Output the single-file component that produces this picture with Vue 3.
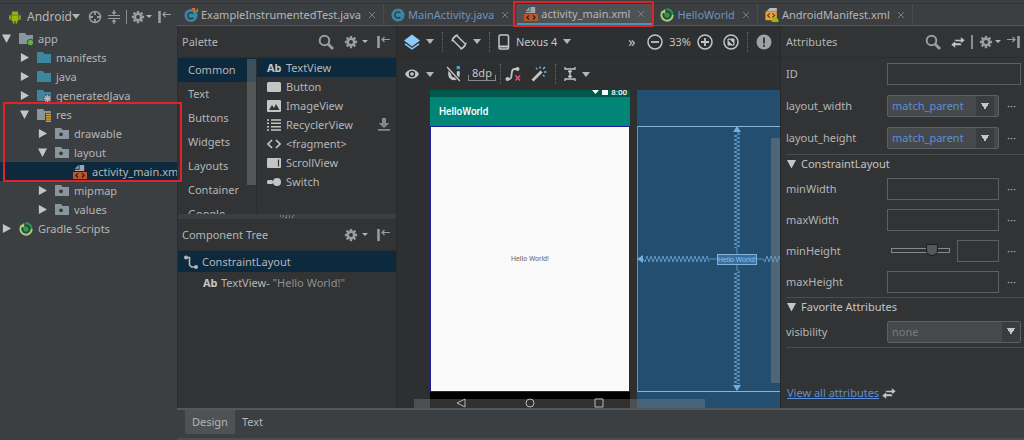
<script setup>
import { ref, computed } from 'vue'

const tree = [
	{ name: 'app', level: 0, icon: 'folder-app', open: true },
	{ name: 'manifests', level: 1, icon: 'folder-blue', open: false },
	{ name: 'java', level: 1, icon: 'folder-blue', open: false },
	{ name: 'generatedJava', level: 1, icon: 'folder-gen', open: false }
]
const resTree = [
	{ name: 'res', level: 1, icon: 'folder-res', open: true },
	{ name: 'drawable', level: 2, icon: 'folder-pkg', open: false },
	{ name: 'layout', level: 2, icon: 'folder-pkg', open: true },
	{ name: 'activity_main.xml', level: 3, icon: 'xml', selected: true }
]
const restTree = [
	{ name: 'mipmap', level: 2, icon: 'folder-pkg', open: false },
	{ name: 'values', level: 2, icon: 'folder-pkg', open: false },
	{ name: 'Gradle Scripts', level: 0, icon: 'gradle', open: false }
]
const treeGroups = [
	{ rows: tree },
	{ rows: resTree, marked: true },
	{ rows: restTree }
]

const tabs = [
	{ name: 'ExampleInstrumentedTest.java', icon: 'class-test' },
	{ name: 'MainActivity.java', icon: 'class', changed: true },
	{ name: 'activity_main.xml', icon: 'xml', active: true },
	{ name: 'HelloWorld', icon: 'gradle', changed: true },
	{ name: 'AndroidManifest.xml', icon: 'manifest' }
]

const categories = ['Common', 'Text', 'Buttons', 'Widgets', 'Layouts', 'Containers', 'Google']
const currentCategory = ref(0)

const widgets = [
	{ name: 'TextView', icon: 'ab' },
	{ name: 'Button', icon: 'button' },
	{ name: 'ImageView', icon: 'image' },
	{ name: 'RecyclerView', icon: 'list', download: true },
	{ name: '<fragment>', icon: 'code' },
	{ name: 'ScrollView', icon: 'scroll' },
	{ name: 'Switch', icon: 'switch' }
]
const currentWidget = ref(0)

const layoutWidth = ref('match_parent')
const layoutHeight = ref('match_parent')
const minHeight = ref(76)
const mode = ref('Design')

// spring line of a constraint, drawn from one end to the other
const spring = (from, to, center, vertical) => {
	let d = vertical ? `M${center} ${from}` : `M${from} ${center}`
	let side = 1
	for (let i = from + 2; i <= to; i += 2) {
		const off = center + side * 3
		d += vertical ? `L${off} ${i}` : `L${i} ${off}`
		side = -side
	}
	return d
}
const springs = computed(() => [
	spring(42, 158, 100, true),
	spring(180, 294, 100, true),
	spring(6, 72, 169, false),
	spring(126, 192, 169, false)
])
</script>

<template>
	<svg class="sprite" aria-hidden="true">
		<symbol id="gear" viewBox="0 0 16 16">
			<circle cx="8" cy="8" r="3.7" fill="none" stroke="currentColor" stroke-width="3" />
			<path d="M8 1v3M8 12v3M1 8h3M12 8h3M3 3l2 2M11 11l2 2M13 3l-2 2M5 11l-2 2" stroke="currentColor" stroke-width="2.6" />
		</symbol>
		<symbol id="dock" viewBox="0 0 14 14">
			<path d="M2.5 1v12" stroke="currentColor" stroke-width="2.6" />
			<path d="M6 4.500h8M8.500 2L6 4.500l2.500 2.500" fill="none" stroke="currentColor" stroke-width="1.200" />
		</symbol>
		<symbol id="search" viewBox="0 0 16 16">
			<circle cx="6.500" cy="6.500" r="4.800" fill="none" stroke="currentColor" stroke-width="2" />
			<path d="M10 10l5 5" stroke="currentColor" stroke-width="2.800" />
		</symbol>
		<symbol id="swap" viewBox="0 0 16 14">
			<path d="M4 4h7V1l5 4-5 4V6.500H4zM12 8H5V5.500L0 10l5 4v-3h7z" fill="currentColor" stroke="#313335" stroke-width=".6" />
		</symbol>
		<symbol id="android" viewBox="0 0 14 16">
			<path d="M3 6h8v6.500H3zM3 5.300a4 3.700 0 0 1 8 0zM.5 6h1.700v5H.5zM11.800 6h1.700v5h-1.700zM4.500 12h1.800v3.500H4.500zM7.700 12h1.800v3.500H7.700z" fill="#97b80f" />
			<path d="M4 .8l1.300 2M10 .8l-1.300 2" stroke="#97b80f" stroke-width=".8" />
		</symbol>
		<symbol id="target" viewBox="0 0 14 14">
			<circle cx="7" cy="7" r="5.500" fill="none" stroke="currentColor" stroke-width="1.500" />
			<path d="M7 1v4M7 9v4M1 7h4M9 7h4" stroke="currentColor" stroke-width="1.800" />
		</symbol>
		<symbol id="collapse" viewBox="0 0 14 14">
			<path d="M1 5.500h12M1 8.500h12" stroke="currentColor" stroke-width="1.200" />
			<path d="M7 0v3M7 14v-3" stroke="currentColor" stroke-width="1.400" />
			<path d="M4.500 2L7 5l2.500-3zM4.500 12L7 9l2.500 3z" fill="currentColor" />
		</symbol>
		<symbol id="folder-blue" viewBox="0 0 14 14">
			<path d="M0 1h6l1.500 2H14v9H0z" fill="#3e86a0" />
		</symbol>
		<symbol id="folder-app" viewBox="0 0 14 14">
			<path d="M0 1h6l1.500 2H14v9H0z" fill="#8a969e" />
			<circle cx="11.500" cy="10.500" r="3.200" fill="#62b543" stroke="#3c3f41" stroke-width="1" />
		</symbol>
		<symbol id="folder-gen" viewBox="0 0 14 14">
			<path d="M0 1h6l1.500 2H14v9H0z" fill="#3e86a0" />
			<circle cx="10.500" cy="9.500" r="4.300" fill="#3c3f41" />
			<path d="M10.500 5.500v8M6.500 9.500h8M7.700 6.700l5.600 5.600M13.300 6.700l-5.600 5.600" stroke="#b4bcc0" stroke-width="1.400" />
		</symbol>
		<symbol id="folder-res" viewBox="0 0 14 14">
			<path d="M0 1h6l1.500 2H14v9H0z" fill="#8a969e" />
			<path d="M8 5h6v9H8z" fill="#3c3f41" />
			<path d="M9 6.500h5M9 8.800h5M9 11h5M9 13.200h5" stroke="#d9a343" stroke-width="1.400" />
		</symbol>
		<symbol id="folder-pkg" viewBox="0 0 14 14">
			<path d="M0 1h6l1.500 2H14v9H0z" fill="#8a969e" />
			<circle cx="6" cy="7.300" r="1.900" fill="#34393c" />
		</symbol>
		<symbol id="xml" viewBox="0 0 15 15">
			<path d="M7 0h5v6.500H2V5h5zM6 0v4H2z" fill="#9aa7b0" />
			<path d="M0 7.500h15V15H0z" fill="#b9572b" />
			<path d="M5.500 9L3 11.200l2.500 2.200M9.500 9l2.500 2.200-2.500 2.200" fill="none" stroke="#2b2220" stroke-width="1.300" />
		</symbol>
		<symbol id="gradle" viewBox="0 0 16 16">
			<path d="M8 14.500A6.500 6.500 0 0 1 3 4" fill="none" stroke="#a5cf7b" stroke-width="2.200" />
			<path d="M8 14.500A6.500 6.500 0 0 0 14.500 8" fill="none" stroke="#a5cf7b" stroke-width="2.200" />
			<path d="M7.500 1.500A6.500 6.500 0 0 1 14.500 8" fill="none" stroke="#1ba24b" stroke-width="2.200" />
			<path d="M1 4.500L6 1v5.500z" fill="#a5cf7b" />
			<circle cx="8" cy="8" r="3" fill="#1ba24b" />
		</symbol>
		<symbol id="class" viewBox="0 0 15 15">
			<circle cx="7.500" cy="7.500" r="7" fill="#3e86a0" />
			<path d="M10 5.300a3.300 3.300 0 1 0 0 4.400" fill="none" stroke="#253c47" stroke-width="1.500" />
		</symbol>
		<symbol id="class-test" viewBox="0 0 15 15">
			<circle cx="7.500" cy="8" r="7" fill="#3e86a0" />
			<path d="M9.800 6a3.300 3.300 0 1 0 0 4.400" fill="none" stroke="#253c47" stroke-width="1.500" />
			<path d="M8 0h4v5z" fill="#f26522" />
			<path d="M15 0v4h-3z" fill="#62b543" />
		</symbol>
		<symbol id="manifest" viewBox="0 0 15 16">
			<path d="M5 0h8v4H1z" fill="#b4bcc0" />
			<path d="M0 4h13v10H0z" fill="#e9a13b" />
			<path d="M5 6L2.500 8.500 5 11M8 6l2.500 2.500L8 11" fill="none" stroke="#4a3213" stroke-width="1.200" />
			<path d="M7 15a4 4 0 0 1 8 0v1H7z" fill="#97b80f" />
		</symbol>
		<symbol id="button" viewBox="0 0 14 14">
			<rect y="2" width="14" height="10" rx="1.500" fill="currentColor" />
		</symbol>
		<symbol id="image" viewBox="0 0 14 14">
			<rect y="1" width="14" height="12" rx="1" fill="currentColor" />
			<path d="M2 11l3-5 2 3 2-4 3.500 6z" fill="#313335" />
		</symbol>
		<symbol id="list" viewBox="0 0 14 14">
			<path d="M0 2h2M0 5.300h2M0 8.700h2M0 12h2M4 2h10M4 5.300h10M4 8.700h10M4 12h10" stroke="currentColor" stroke-width="1.500" />
		</symbol>
		<symbol id="code" viewBox="0 0 14 14">
			<path d="M5 3L1 7l4 4M9 3l4 4-4 4" fill="none" stroke="currentColor" stroke-width="1.600" />
		</symbol>
		<symbol id="scroll" viewBox="0 0 14 14">
			<rect y="2" width="14" height="10" rx="1" fill="currentColor" />
			<path d="M11.500 3.500v7" stroke="#313335" stroke-width="1.200" />
		</symbol>
		<symbol id="switch" viewBox="0 0 14 14">
			<rect y="5" width="6" height="4" rx="1.500" fill="currentColor" />
			<circle cx="10" cy="7" r="4" fill="currentColor" />
		</symbol>
		<symbol id="download" viewBox="0 0 12 13">
			<path d="M4 0h4v5h3.500L6 10 .5 5H4zM0 11h12v1.800H0z" fill="#85898b" />
		</symbol>
		<symbol id="constraint" viewBox="0 0 14 14">
			<path d="M2 2.500h3.500v7.500l2 2H12" fill="none" stroke="currentColor" stroke-width="1.600" />
			<circle cx="2" cy="2.500" r="2" fill="currentColor" />
			<circle cx="12" cy="12" r="2" fill="currentColor" />
		</symbol>
		<symbol id="layers" viewBox="0 0 16 16">
			<path d="M8 .5l8 6-8 6-8-6z" fill="#8fcbfa" />
			<path d="M1 9.800l7 5 7-5" fill="none" stroke="#8fcbfa" stroke-width="1.600" />
		</symbol>
		<symbol id="rotate" viewBox="0 0 16 16">
			<rect x="5" y="1.500" width="6" height="13" rx="1" fill="none" stroke="currentColor" stroke-width="1.500" transform="rotate(-45 8 8)" />
			<path d="M1 7.500a7 7 0 0 1 6-6.700M15 8.500a7 7 0 0 1-6 6.700" fill="none" stroke="currentColor" stroke-width="1.300" />
		</symbol>
		<symbol id="phone" viewBox="0 0 12 16">
			<rect x="1" y="1" width="9.500" height="14" rx="1.200" fill="none" stroke="currentColor" stroke-width="1.500" />
			<path d="M1 12.500h9.500" stroke="currentColor" stroke-width="2" />
		</symbol>
		<symbol id="minus" viewBox="0 0 16 16">
			<circle cx="8" cy="8" r="7" fill="none" stroke="currentColor" stroke-width="1.500" />
			<path d="M4 8h8" stroke="currentColor" stroke-width="1.800" />
		</symbol>
		<symbol id="plus" viewBox="0 0 16 16">
			<circle cx="8" cy="8" r="7" fill="none" stroke="currentColor" stroke-width="1.500" />
			<path d="M4 8h8M8 4v8" stroke="currentColor" stroke-width="1.800" />
		</symbol>
		<symbol id="fit" viewBox="0 0 16 16">
			<circle cx="8" cy="8" r="7" fill="none" stroke="currentColor" stroke-width="1.500" />
			<rect x="4.500" y="4.500" width="7" height="7" rx="1" fill="currentColor" />
			<path d="M6 6l4 4" stroke="#2d2f31" stroke-width="2" />
		</symbol>
		<symbol id="alert" viewBox="0 0 16 16">
			<circle cx="8" cy="8" r="7.500" fill="currentColor" />
			<path d="M8 3.500v6M8 10.800v2" stroke="#2d2f31" stroke-width="1.800" />
		</symbol>
		<symbol id="eye" viewBox="0 0 16 12">
			<path d="M1 6c3-6 11-6 14 0-3 6-11 6-14 0z" fill="currentColor" />
			<circle cx="8" cy="6" r="3.200" fill="#2d2f31" />
			<circle cx="8" cy="6" r="1.800" fill="currentColor" />
		</symbol>
		<symbol id="magnet" viewBox="0 0 15 15">
			<path d="M3.500 3v5a4 4 0 0 0 8 0V5" fill="none" stroke="currentColor" stroke-width="2.800" />
			<path d="M1 1l12 13" stroke="#2d2f31" stroke-width="3" />
			<path d="M1 1l12 13" stroke="currentColor" stroke-width="1.300" />
			<path d="M10 0h3v3h-3z" fill="#4fa3d8" />
		</symbol>
		<symbol id="clear" viewBox="0 0 16 16">
			<path d="M1 13h3.500c4 0 0-10 5-10H13" fill="none" stroke="currentColor" stroke-width="1.800" />
			<circle cx="2.500" cy="13" r="2" fill="currentColor" />
			<circle cx="12.500" cy="3" r="2" fill="currentColor" />
			<path d="M10.500 9.500l4.500 5M15 9.500l-4.500 5" stroke="#e0546e" stroke-width="1.700" />
		</symbol>
		<symbol id="wand" viewBox="0 0 16 16">
			<path d="M1.500 14.500l9-9" stroke="currentColor" stroke-width="2.800" />
			<path d="M9 .5v2M5 2l1.300 1.300M14 1l-2 2M13 6h2.500M12 9l1.500 1.500" stroke="#69b4e8" stroke-width="1.500" />
		</symbol>
		<symbol id="align" viewBox="0 0 12 16">
			<path d="M1 1v2h10V1M1 15v-2h10v2" fill="none" stroke="currentColor" stroke-width="1.300" />
			<path d="M6 4v8M4 5.500h4M4 10.500h4" stroke="currentColor" stroke-width="1.500" />
		</symbol>
	</svg>

	<div class="studio">
		<aside class="project">
			<header class="project-bar">
				<svg class="icon"><use href="#android" /></svg>
				<span class="project-name">Android</span>
				<i class="caret"></i>
				<svg class="icon first"><use href="#target" /></svg>
				<svg class="icon"><use href="#collapse" /></svg>
				<i class="bar"></i>
				<svg class="icon"><use href="#gear" /></svg>
				<i class="caret small"></i>
				<svg class="icon dock"><use href="#dock" /></svg>
			</header>
			<ul v-for="(group, index) in treeGroups" :key="index" :class="{ marked: group.marked }">
				<li
					v-for="row in group.rows"
					:key="row.name"
					:class="['tree-row', 'level-' + row.level, { selected: row.selected }]">
					<i :class="['arrow', row.open ? 'down' : 'right', { none: row.selected }]"></i>
					<svg class="icon"><use :href="'#' + row.icon" /></svg>
					<span>{{ row.name }}</span>
				</li>
			</ul>
		</aside>

		<main class="editor">
			<nav class="tabs">
				<button
					v-for="tab in tabs"
					:key="tab.name"
					:class="['tab', { active: tab.active, changed: tab.changed }]">
					<svg class="icon"><use :href="'#' + tab.icon" /></svg>
					<span>{{ tab.name }}</span>
					<svg class="close" viewBox="0 0 8 8"><path d="M1 1l6 6M7 1L1 7" stroke="currentColor" /></svg>
				</button>
			</nav>

			<div class="workspace">
				<section class="side">
					<header class="panel-bar">
						<h2>Palette</h2>
						<svg class="icon big"><use href="#search" /></svg>
						<svg class="icon"><use href="#gear" /></svg>
						<i class="caret small"></i>
						<svg class="icon dock"><use href="#dock" /></svg>
					</header>
					<div class="palette">
						<ul class="categories">
							<li
								v-for="(category, index) in categories"
								:key="category"
								:class="{ selected: currentCategory == index }"
								@click="currentCategory = index">
								<span>{{ category }}</span>
							</li>
						</ul>
						<ul class="widgets">
							<li
								v-for="(widget, index) in widgets"
								:key="widget.name"
								:class="{ selected: currentWidget == index }"
								@click="currentWidget = index">
								<b v-if="widget.icon == 'ab'" class="ab">Ab</b>
								<svg v-else class="icon"><use :href="'#' + widget.icon" /></svg>
								<span>{{ widget.name }}</span>
								<svg v-if="widget.download" class="icon download"><use href="#download" /></svg>
							</li>
						</ul>
					</div>
					<div class="splitter"><i></i></div>
					<header class="panel-bar">
						<h2>Component Tree</h2>
						<svg class="icon"><use href="#gear" /></svg>
						<i class="caret small"></i>
						<svg class="icon dock"><use href="#dock" /></svg>
					</header>
					<ul class="components">
						<li class="selected">
							<svg class="icon"><use href="#constraint" /></svg>
							<span>ConstraintLayout</span>
						</li>
						<li class="child">
							<b class="ab">Ab</b>
							<span>TextView- <em>"Hello World!"</em></span>
						</li>
					</ul>
				</section>

				<section class="design">
					<div class="toolbar">
						<svg class="icon big"><use href="#layers" /></svg>
						<i class="caret"></i>
						<i class="dots"></i>
						<svg class="icon big"><use href="#rotate" /></svg>
						<i class="caret"></i>
						<i class="dots"></i>
						<svg class="icon big narrow"><use href="#phone" /></svg>
						<span>Nexus 4</span>
						<i class="caret"></i>
						<span class="more">»</span>
						<svg class="icon big"><use href="#minus" /></svg>
						<span>33%</span>
						<svg class="icon big"><use href="#plus" /></svg>
						<svg class="icon big fit"><use href="#fit" /></svg>
						<i class="dots"></i>
						<svg class="icon big alert"><use href="#alert" /></svg>
					</div>
					<div class="toolbar second">
						<svg class="icon big"><use href="#eye" /></svg>
						<i class="caret"></i>
						<svg class="icon big magnet"><use href="#magnet" /></svg>
						<span class="margin">8dp</span>
						<i class="dots tight"></i>
						<svg class="icon big"><use href="#clear" /></svg>
						<svg class="icon big wand"><use href="#wand" /></svg>
						<i class="dots"></i>
						<svg class="icon big narrow"><use href="#align" /></svg>
						<i class="caret"></i>
					</div>
					<div class="canvas">
						<div class="device">
							<div class="status">
								<svg class="signal" viewBox="0 0 16 7"><path d="M0 0h7L3.500 4zM10 0h6v5h-6z" fill="#fff" /></svg>
								<span>8:00</span>
							</div>
							<div class="app-bar">HelloWorld</div>
							<div class="screen">Hello World!</div>
							<div class="nav-bar">
								<svg viewBox="0 0 10 10"><path d="M9 1v8L1 5z" /></svg>
								<svg viewBox="0 0 10 10"><circle cx="5" cy="5" r="4" /></svg>
								<svg viewBox="0 0 10 10"><path d="M1 1h8v8H1z" /></svg>
							</div>
						</div>
						<div class="blueprint">
							<svg class="wires" width="200" height="318" fill="none">
								<path d="M0 36.500h200M0 301.500h200" stroke="#86b6d4" />
								<path d="M.5 36v266" stroke="#6f93aa" />
								<g stroke="#6ba6d8" stroke-width=".8">
									<path v-for="(d, index) in springs" :key="index" :d="d" />
									<path d="M100 158v6M100 174v6M72 169h8M120 169h6" />
								</g>
								<path d="M100 36l-4 6h8zM100 301l-4-6h8zM0 169l6-4v8z" fill="#6fb0e6" />
								<rect x="80.500" y="164.500" width="39" height="10" fill="#3a6f9c" stroke="#7fb4dd" />
								<text x="81" y="172">Hello World!</text>
							</svg>
						</div>
						<i class="scroll-y"></i>
						<i class="scroll-x"></i>
					</div>
				</section>

				<section class="attributes">
					<header class="panel-bar">
						<h2>Attributes</h2>
						<svg class="icon big"><use href="#search" /></svg>
						<svg class="icon swap"><use href="#swap" /></svg>
						<i class="bar"></i>
						<svg class="icon"><use href="#gear" /></svg>
						<i class="caret small"></i>
						<svg class="icon dock flip"><use href="#dock" /></svg>
					</header>
					<div class="group main-group">
						<div class="field wide">
							<label for="attr-id">ID</label>
							<input id="attr-id" type="text" />
						</div>
						<div class="field">
							<label for="attr-width">layout_width</label>
							<div class="select boxed">
								<select id="attr-width" v-model="layoutWidth">
									<option>match_parent</option>
									<option>wrap_content</option>
								</select>
							</div>
							<span class="ellipsis">···</span>
						</div>
						<div class="field">
							<label for="attr-height">layout_height</label>
							<div class="select boxed">
								<select id="attr-height" v-model="layoutHeight">
									<option>match_parent</option>
									<option>wrap_content</option>
								</select>
							</div>
							<span class="ellipsis">···</span>
						</div>
					</div>
					<div class="group">
						<h3><i class="arrow down"></i>ConstraintLayout</h3>
						<div class="field">
							<label for="attr-min-width">minWidth</label>
							<input id="attr-min-width" type="text" />
							<span class="ellipsis">···</span>
						</div>
						<div class="field">
							<label for="attr-max-width">maxWidth</label>
							<input id="attr-max-width" type="text" />
							<span class="ellipsis">···</span>
						</div>
						<div class="field">
							<label for="attr-min-height">minHeight</label>
							<div class="slider">
								<input id="attr-min-height" v-model="minHeight" type="range" min="0" max="100" />
								<input type="text" aria-label="minHeight value" />
							</div>
							<span class="ellipsis">···</span>
						</div>
						<div class="field">
							<label for="attr-max-height">maxHeight</label>
							<input id="attr-max-height" type="text" />
							<span class="ellipsis">···</span>
						</div>
					</div>
					<div class="group">
						<h3><i class="arrow down"></i>Favorite Attributes</h3>
						<div class="field wide">
							<label for="attr-visibility">visibility</label>
							<div class="select muted">
								<select id="attr-visibility">
									<option>none</option>
									<option>visible</option>
								</select>
							</div>
						</div>
					</div>
					<p class="view-all">
						<a href="#">View all attributes</a>
						<svg class="icon swap"><use href="#swap" /></svg>
					</p>
				</section>
			</div>

			<footer class="modes">
				<button
					v-for="name in ['Design', 'Text']"
					:key="name"
					:class="{ active: mode == name }"
					@click="mode = name">
					{{ name }}
				</button>
			</footer>
		</main>
	</div>
</template>

<style>
body {
	background-color: #3c3f41;
}
</style>

<style scoped>
* {
	margin: 0;
	padding: 0;
	box-sizing: border-box;
}

.sprite {
	position: absolute;
	width: 0;
	height: 0;
}

.studio {
	display: grid;
	grid-template-columns: 177px minmax(0, 1fr);
	min-height: 100vh;
	padding-top: 3px;
	background-color: #3c3f41;
	color: #b4b6b7;
	font-family: 'Noto Sans', sans-serif;
	font-size: 11px;
	line-height: 18px;
	white-space: nowrap;
}

ul {
	list-style: none;
}

button,
input,
select {
	font: inherit;
	color: inherit;
	border: none;
	background: none;
	outline: none;
}

.icon {
	width: 14px;
	height: 14px;
	flex: none;
}

.icon.big {
	width: 16px;
	height: 16px;
}

.icon.narrow {
	width: 12px;
}

.caret {
	flex: none;
	border: 4px solid transparent;
	border-top: 5px solid #b4b6b7;
	border-bottom: none;
}

.caret.small {
	border-width: 3px;
	border-bottom: none;
}

.bar {
	width: 2px;
	height: 14px;
	background-color: #8a8c8d;
}

.arrow {
	flex: none;
	width: 9px;
	height: 9px;
	background-color: #c4c5c6;
}

.arrow.right {
	clip-path: polygon(10% 0, 100% 50%, 10% 100%);
}

.arrow.down {
	clip-path: polygon(0 5%, 100% 5%, 50% 100%);
}

.arrow.none {
	visibility: hidden;
}

.selected {
	background-color: #0d293e;
}

/* project tree */
.project {
	border-top: 1px solid #303234;
}

.project-bar {
	display: flex;
	align-items: center;
	gap: 5px;
	height: 25px;
	padding: 0 6px 0 8px;
	color: #9a9c9d;
}

.project-name {
	margin-right: -5px;
	color: #b4b6b7;
	font-size: 12px;
}

.project-bar .first {
	margin-left: 3px;
}

.project-bar .small,
.panel-bar .small {
	margin-left: -4px;
}

.dock {
	margin-left: auto;
}

.tree-row {
	display: flex;
	align-items: center;
	height: 19px;
	overflow: hidden;
}

.tree-row .arrow {
	margin-right: 8px;
}

.tree-row .icon {
	margin-right: 5px;
}

.level-0 {
	padding-left: 2px;
}

.level-1 {
	padding-left: 20px;
}

.level-2 {
	padding-left: 38px;
}

.level-3 {
	padding-left: 56px;
}

.marked {
	position: relative;
}

.marked::after {
	content: '';
	position: absolute;
	z-index: 2;
	inset: -3px -5px -1px 3px;
	border: 2px solid #e0222b;
}

/* editor tabs */
.editor {
	display: flex;
	flex-direction: column;
	min-width: 0;
}

.tabs {
	display: flex;
	height: 23px;
	border-top: 1px solid #303234;
	border-bottom: 1px solid #55585a;
}

.tab {
	display: flex;
	align-items: center;
	position: relative;
	gap: 3px;
	padding: 0 7px;
	border-right: 1px solid #4b4e50;
}

.tab.changed {
	color: #6f93bb;
}

.tab .close {
	width: 8px;
	height: 8px;
	margin-left: 4px;
	color: #7b7e80;
}

.tab.active {
	background-color: #4e5254;
	border-bottom: 2px solid #3e9ab8;
}

.tab.active::after {
	content: '';
	position: absolute;
	z-index: 2;
	inset: -3px -2px -4px -4px;
	border: 2px solid #e0222b;
}

/* panels */
.workspace {
	flex: 1;
	display: grid;
	grid-template-columns: 219px minmax(0, 1fr) 243px;
	background-color: #313335;
}

.panel-bar {
	display: flex;
	align-items: center;
	gap: 8px;
	height: 32px;
	padding: 0 6px 0 4px;
	border-bottom: 1px solid #2b2d2e;
	color: #9a9c9d;
}

.panel-bar h2 {
	flex: 1;
	color: #b4b6b7;
	font-size: 11px;
	font-weight: 400;
}

.side {
	border-left: 1px solid #2b2d2e;
}

.side .big {
	margin-right: 2px;
}

.palette {
	display: grid;
	grid-template-columns: 79px minmax(0, 1fr);
	height: 156px;
	overflow: hidden;
}

.categories {
	position: relative;
	height: 156px;
	overflow: hidden;
	border-right: 1px solid #2b2d2e;
}

.categories::after {
	content: '';
	position: absolute;
	top: 1px;
	right: 0;
	width: 9px;
	height: 126px;
	background-color: rgba(140, 140, 140, 0.4);
}

.categories li {
	height: 24px;
	padding: 3px 17px 3px 10px;
}

.categories span {
	display: block;
	overflow: hidden;
}

.widgets li {
	display: flex;
	align-items: center;
	gap: 5px;
	height: 19px;
	padding: 0 6px 0 10px;
}

.widgets .icon {
	color: #c4c5c6;
}

.widgets .download {
	width: 12px;
	height: 13px;
	margin-left: auto;
}

.ab {
	width: 14px;
	color: #c4c5c6;
}

.splitter {
	display: flex;
	justify-content: center;
	align-items: center;
	height: 5px;
	background-color: #3c3f41;
}

.splitter i {
	width: 14px;
	height: 3px;
	background: repeating-linear-gradient(110deg, #7b7e80 0 1px, transparent 1px 3px);
}

.components li {
	display: flex;
	align-items: center;
	gap: 4px;
	height: 21px;
	padding-left: 6px;
}

.components .child {
	padding-left: 25px;
}

.components em {
	color: #8e9091;
	font-style: normal;
}

/* design surface */
.design {
	display: flex;
	flex-direction: column;
	background-color: #2d2f31;
	border-left: 1px solid #27292a;
	border-right: 1px solid #27292a;
}

.toolbar {
	display: flex;
	align-items: center;
	gap: 6px;
	height: 32px;
	padding: 0 8px 0 7px;
	border-bottom: 1px solid #292b2c;
	color: #c4c5c6;
}

.toolbar.second {
	border-bottom: none;
}

.dots {
	height: 20px;
	margin: 0 2px;
	border-left: 1px dotted #666869;
}

.dots.tight {
	margin: 0 -2px;
}

.more {
	margin-left: auto;
	margin-right: 6px;
	font-size: 14px;
}

.fit {
	margin-left: 4px;
}

.alert {
	color: #9fa1a2;
}

.magnet {
	margin-left: 6px;
}

.margin {
	width: 28px;
	height: 14px;
	line-height: 12px;
	text-align: center;
	border: 1px solid #85898b;
	border-top: none;
	border-image: linear-gradient(to bottom, transparent 60%, #85898b 60%) 1;
}

.wand {
	margin-left: 4px;
}

.canvas {
	display: flex;
	gap: 7px;
	flex: 1;
	position: relative;
	padding-left: 33px;
	overflow: hidden;
}

.device {
	flex: none;
	width: 200px;
	font-family: Roboto, sans-serif;
}

.status {
	display: flex;
	justify-content: flex-end;
	align-items: flex-start;
	gap: 3px;
	height: 7px;
	padding-right: 3px;
	overflow: hidden;
	background-color: #00574b;
	color: #fff;
	font-size: 8px;
	font-weight: 500;
	line-height: 5px;
}

.signal {
	width: 16px;
	height: 7px;
}

.app-bar {
	height: 29px;
	padding-left: 9px;
	line-height: 29px;
	background-color: #008577;
	color: #fff;
	font-size: 10px;
	font-weight: 500;
}

.screen {
	display: flex;
	justify-content: center;
	align-items: center;
	height: 266px;
	border: 1px solid #1c1ca0;
	background-color: #fafafa;
	color: #666;
	font-size: 7px;
}

.nav-bar {
	display: flex;
	justify-content: space-between;
	align-items: flex-end;
	height: 16px;
	padding: 0 26px;
	background-color: #000;
}

.nav-bar svg {
	width: 10px;
	height: 10px;
	fill: none;
	stroke: #d0d0d0;
}

.blueprint {
	flex: 1;
	min-width: 0;
	overflow: hidden;
	background-color: #234e6f;
}

.wires {
	display: block;
}

.wires text {
	fill: #8fc0ea;
	font-family: Roboto, sans-serif;
	font-size: 7px;
}

.scroll-y {
	position: absolute;
	top: 48px;
	right: 0;
	width: 9px;
	height: 245px;
	background-color: rgba(140, 140, 140, 0.4);
}

.scroll-x {
	position: absolute;
	left: 17px;
	right: 75px;
	bottom: 0;
	height: 9px;
	background-color: rgba(140, 140, 140, 0.35);
}

/* attributes */
.attributes {
	display: flex;
	flex-direction: column;
}

.attributes .panel-bar {
	padding: 0 3px 0 5px;
	gap: 6px;
}

.attributes .panel-bar .big {
	margin-right: 4px;
}

.swap {
	color: #c4c5c6;
}

.flip {
	transform: scaleX(-1);
}

.group {
	margin-left: 5px;
	border-bottom: 1px solid #4b4e50;
}

.field {
	display: grid;
	grid-template-columns: 101px minmax(0, 1fr) 25px;
	align-items: center;
	height: 31px;
}

.main-group .field {
	height: 32px;
}

.field.wide {
	grid-template-columns: 101px minmax(0, 1fr);
	padding-right: 3px;
}

.field input[type='text'] {
	width: 100%;
	height: 22px;
	padding: 0 4px;
	border: 1px solid #5e6162;
}

.group h3 {
	display: flex;
	align-items: center;
	gap: 5px;
	height: 18px;
	padding-left: 1px;
	font-size: 11px;
	font-weight: 400;
	color: #c4c5c6;
}

.select {
	position: relative;
	height: 22px;
	border: 1px solid #5e6162;
	border-radius: 2px;
	background-color: #45494b;
}

.select select {
	width: 100%;
	height: 20px;
	padding-left: 4px;
	appearance: none;
	color: #5b8fd9;
}

.select.muted select {
	color: #777a7b;
}

.select::after {
	content: '';
	position: absolute;
	top: 0;
	right: 0;
	width: 18px;
	height: 20px;
	pointer-events: none;
	background:
		conic-gradient(from -30deg at 50% 100%, #c4c5c6 60deg, transparent 0) center / 8px 7px no-repeat,
		#3a3d3f;
}

.select.boxed::after {
	right: 4px;
}

.ellipsis {
	text-align: center;
}

.slider {
	display: flex;
	align-items: center;
	gap: 7px;
	padding-left: 4px;
}

.slider input[type='range'] {
	flex: 1;
	min-width: 0;
	height: 14px;
	appearance: none;
}

.slider input[type='range']::-webkit-slider-runnable-track {
	height: 5px;
	border: 1px solid #85898b;
}

.slider input[type='range']::-webkit-slider-thumb {
	appearance: none;
	width: 12px;
	height: 12px;
	margin-top: -5px;
	background-color: #55585a;
	border: 1px solid #191a1b;
	border-radius: 1px 1px 6px 6px;
}

.slider input[type='text'] {
	width: 42px;
	flex: none;
}

.view-all {
	display: flex;
	align-items: center;
	gap: 3px;
	margin-top: auto;
	padding: 0 0 6px 6px;
}

.view-all a {
	color: #5b8fd9;
	text-decoration: underline;
}

/* design / text switch */
.modes {
	display: flex;
	height: 32px;
	padding-left: 8px;
	border-top: 2px solid #55585a;
	border-bottom: 2px solid #4b4e50;
}

.modes button {
	height: 24px;
	padding: 0 7px;
}

.modes .active {
	background-color: #4e5254;
}
</style>
